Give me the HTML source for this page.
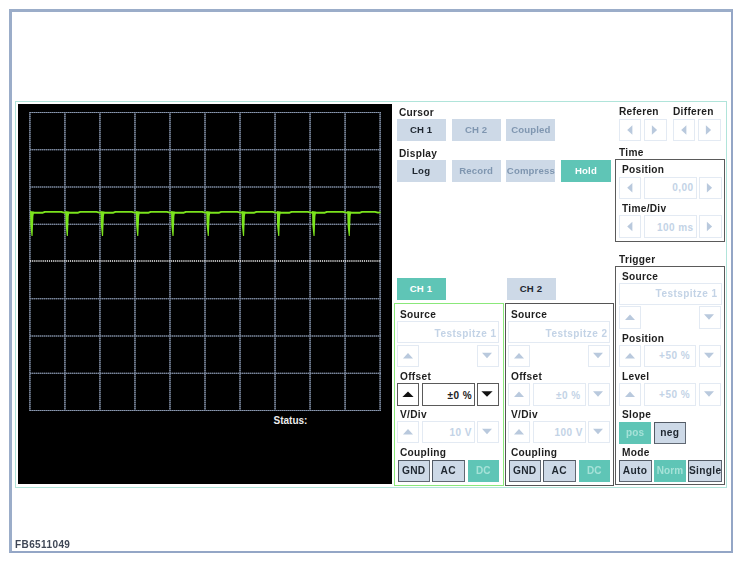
<!DOCTYPE html><html><head><meta charset="utf-8"><title>Scope</title><style>
*{box-sizing:border-box;margin:0;padding:0}
html,body{width:742px;height:562px;background:#fff;overflow:hidden}
body{position:relative;font-family:"Liberation Sans",sans-serif;font-weight:bold;font-size:10px;color:#222}
.a{position:absolute}
.frame{left:9px;top:9px;width:724px;height:544px;border:solid #94a6c6;border-width:3px 2px 2px 3px;border-top-color:#9badc9;border-left-color:#9badc9}
.inner{left:15px;top:101px;width:712px;height:387px;border:1px solid #b0e4da}
.scope{left:18px;top:104px;width:374px;height:380px;background:#000}
.lbl{position:absolute;font-size:10.15px;line-height:12px;color:#1e1e1e;white-space:nowrap;letter-spacing:0.3px}
.btn{position:absolute;height:22px;line-height:22px;text-align:center;font-size:9.6px;background:#cdd9e7;color:#1f2730;white-space:nowrap;letter-spacing:0.15px}
.btn.dis{color:#7f96b0}
.btn.on{background:#5fc5b6;color:#fff}
.btn.on.dim{color:#a6e2d8;font-size:10px}
.btn.bd{border:1px solid #606873;border-top-color:#525a65;border-left-color:#525a65;font-size:10.2px;letter-spacing:0.3px}
.box{position:absolute;height:22px;border:1px solid #e3eaf3;background:#fff;line-height:20px;font-size:10px;color:#c3d3e6;text-align:right;padding-right:5px;white-space:nowrap;letter-spacing:0.45px}
.box.act{border:1px solid #5a5a5a;color:#222}
.panel{position:absolute;border:1px solid #5a5a5a;background:transparent}
.tri{position:absolute;width:0;height:0}
</style></head><body><div id="root" style="position:absolute;left:0;top:0;width:742px;height:562px;filter:blur(0.3px)"><div class="a frame"></div>
<div class="a inner"></div>
<div class="a scope"></div>
<svg class="a" style="left:0;top:0" width="742" height="562"><g style="filter:blur(0.35px)"><line x1="29.90" y1="112" x2="29.90" y2="411" stroke="#5e6a7e" stroke-width="1.2"/><line x1="29.90" y1="112" x2="29.90" y2="411" stroke="#8c99ae" stroke-width="1.2" stroke-dasharray="1 1"/><line x1="64.92" y1="112" x2="64.92" y2="411" stroke="#5e6a7e" stroke-width="1.2"/><line x1="64.92" y1="112" x2="64.92" y2="411" stroke="#8c99ae" stroke-width="1.2" stroke-dasharray="1 1"/><line x1="99.94" y1="112" x2="99.94" y2="411" stroke="#5e6a7e" stroke-width="1.2"/><line x1="99.94" y1="112" x2="99.94" y2="411" stroke="#8c99ae" stroke-width="1.2" stroke-dasharray="1 1"/><line x1="134.96" y1="112" x2="134.96" y2="411" stroke="#5e6a7e" stroke-width="1.2"/><line x1="134.96" y1="112" x2="134.96" y2="411" stroke="#8c99ae" stroke-width="1.2" stroke-dasharray="1 1"/><line x1="169.98" y1="112" x2="169.98" y2="411" stroke="#5e6a7e" stroke-width="1.2"/><line x1="169.98" y1="112" x2="169.98" y2="411" stroke="#8c99ae" stroke-width="1.2" stroke-dasharray="1 1"/><line x1="205.00" y1="112" x2="205.00" y2="411" stroke="#5e6a7e" stroke-width="1.2"/><line x1="205.00" y1="112" x2="205.00" y2="411" stroke="#8c99ae" stroke-width="1.2" stroke-dasharray="1 1"/><line x1="240.02" y1="112" x2="240.02" y2="411" stroke="#5e6a7e" stroke-width="1.2"/><line x1="240.02" y1="112" x2="240.02" y2="411" stroke="#8c99ae" stroke-width="1.2" stroke-dasharray="1 1"/><line x1="275.04" y1="112" x2="275.04" y2="411" stroke="#5e6a7e" stroke-width="1.2"/><line x1="275.04" y1="112" x2="275.04" y2="411" stroke="#8c99ae" stroke-width="1.2" stroke-dasharray="1 1"/><line x1="310.06" y1="112" x2="310.06" y2="411" stroke="#5e6a7e" stroke-width="1.2"/><line x1="310.06" y1="112" x2="310.06" y2="411" stroke="#8c99ae" stroke-width="1.2" stroke-dasharray="1 1"/><line x1="345.08" y1="112" x2="345.08" y2="411" stroke="#5e6a7e" stroke-width="1.2"/><line x1="345.08" y1="112" x2="345.08" y2="411" stroke="#8c99ae" stroke-width="1.2" stroke-dasharray="1 1"/><line x1="380.10" y1="112" x2="380.10" y2="411" stroke="#5e6a7e" stroke-width="1.2"/><line x1="380.10" y1="112" x2="380.10" y2="411" stroke="#8c99ae" stroke-width="1.2" stroke-dasharray="1 1"/><line x1="30" y1="112.50" x2="381" y2="112.50" stroke="#5e6a7e" stroke-width="1.2"/><line x1="30" y1="112.50" x2="381" y2="112.50" stroke="#8c99ae" stroke-width="1.2" stroke-dasharray="1 1"/><line x1="30" y1="149.75" x2="381" y2="149.75" stroke="#5e6a7e" stroke-width="1.2"/><line x1="30" y1="149.75" x2="381" y2="149.75" stroke="#8c99ae" stroke-width="1.2" stroke-dasharray="1 1"/><line x1="30" y1="187.00" x2="381" y2="187.00" stroke="#5e6a7e" stroke-width="1.2"/><line x1="30" y1="187.00" x2="381" y2="187.00" stroke="#8c99ae" stroke-width="1.2" stroke-dasharray="1 1"/><line x1="30" y1="224.25" x2="381" y2="224.25" stroke="#5e6a7e" stroke-width="1.2"/><line x1="30" y1="224.25" x2="381" y2="224.25" stroke="#8c99ae" stroke-width="1.2" stroke-dasharray="1 1"/><line x1="30" y1="261.00" x2="381" y2="261.00" stroke="#f2f2f2" stroke-width="1.7" stroke-dasharray="1.2 0.9"/><line x1="30" y1="298.75" x2="381" y2="298.75" stroke="#5e6a7e" stroke-width="1.2"/><line x1="30" y1="298.75" x2="381" y2="298.75" stroke="#8c99ae" stroke-width="1.2" stroke-dasharray="1 1"/><line x1="30" y1="336.00" x2="381" y2="336.00" stroke="#5e6a7e" stroke-width="1.2"/><line x1="30" y1="336.00" x2="381" y2="336.00" stroke="#8c99ae" stroke-width="1.2" stroke-dasharray="1 1"/><line x1="30" y1="373.25" x2="381" y2="373.25" stroke="#5e6a7e" stroke-width="1.2"/><line x1="30" y1="373.25" x2="381" y2="373.25" stroke="#8c99ae" stroke-width="1.2" stroke-dasharray="1 1"/><line x1="30" y1="410.50" x2="381" y2="410.50" stroke="#5e6a7e" stroke-width="1.2"/><line x1="30" y1="410.50" x2="381" y2="410.50" stroke="#8c99ae" stroke-width="1.2" stroke-dasharray="1 1"/></g><path d="M30.9,212.79999999999998 L34.9,212.79999999999998 L42.9,212.7 L44.9,211.89999999999998 L61.2,211.89999999999998 L64.2,212.6 L70.2,212.79999999999998 L78.2,212.7 L80.2,211.89999999999998 L96.4,211.89999999999998 L99.4,212.6 L105.4,212.79999999999998 L113.4,212.7 L115.4,211.89999999999998 L131.7,211.89999999999998 L134.7,212.6 L140.7,212.79999999999998 L148.7,212.7 L150.7,211.89999999999998 L166.9,211.89999999999998 L169.9,212.6 L175.9,212.79999999999998 L183.9,212.7 L185.9,211.89999999999998 L202.2,211.89999999999998 L205.2,212.6 L211.2,212.79999999999998 L219.2,212.7 L221.2,211.89999999999998 L237.4,211.89999999999998 L240.4,212.6 L246.4,212.79999999999998 L254.4,212.7 L256.4,211.89999999999998 L272.6,211.89999999999998 L275.6,212.6 L281.6,212.79999999999998 L289.6,212.7 L291.6,211.89999999999998 L307.9,211.89999999999998 L310.9,212.6 L316.9,212.79999999999998 L324.9,212.7 L326.9,211.89999999999998 L343.1,211.89999999999998 L346.1,212.6 L352.1,212.79999999999998 L360.1,212.7 L362.1,211.89999999999998 L375.0,211.89999999999998 L378.0,212.6 L380.5,212.39999999999998" fill="none" stroke="#7be41d" stroke-width="1.9" stroke-linejoin="round"/><polygon points="30.0,211.0 34.2,211.79999999999998 33.4,216.2 32.6,236 31.5,236 30.4,226" fill="#7be41d"/><polygon points="65.2,211.0 69.5,211.79999999999998 68.7,216.2 67.9,236 66.8,236 65.7,226" fill="#7be41d"/><polygon points="100.5,211.0 104.7,211.79999999999998 103.9,216.2 103.1,236 102.0,236 100.9,226" fill="#7be41d"/><polygon points="135.8,211.0 140.0,211.79999999999998 139.2,216.2 138.3,236 137.2,236 136.2,226" fill="#7be41d"/><polygon points="171.0,211.0 175.2,211.79999999999998 174.4,216.2 173.6,236 172.5,236 171.4,226" fill="#7be41d"/><polygon points="206.2,211.0 210.5,211.79999999999998 209.7,216.2 208.8,236 207.8,236 206.7,226" fill="#7be41d"/><polygon points="241.5,211.0 245.7,211.79999999999998 244.9,216.2 244.1,236 243.0,236 241.9,226" fill="#7be41d"/><polygon points="276.8,211.0 280.9,211.79999999999998 280.1,216.2 279.3,236 278.2,236 277.1,226" fill="#7be41d"/><polygon points="312.0,211.0 316.2,211.79999999999998 315.4,216.2 314.6,236 313.5,236 312.4,226" fill="#7be41d"/><polygon points="347.2,211.0 351.4,211.79999999999998 350.6,216.2 349.8,236 348.8,236 347.6,226" fill="#7be41d"/></svg>
<div class="lbl" style="left:273.5px;top:415px;color:#ececec;font-size:10px;letter-spacing:0">Status:</div>
<div class="lbl" style="left:399px;top:106.9px;">Cursor</div>
<div class="btn " style="left:396.7px;top:119px;width:48.900000000000034px;height:21.599999999999994px;line-height:21.599999999999994px">CH 1</div>
<div class="btn dis" style="left:451.7px;top:119px;width:48.900000000000034px;height:21.599999999999994px;line-height:21.599999999999994px">CH 2</div>
<div class="btn dis" style="left:506.3px;top:119px;width:49.19999999999999px;height:21.599999999999994px;line-height:21.599999999999994px">Coupled</div>
<div class="lbl" style="left:399px;top:147.8px;">Display</div>
<div class="btn " style="left:396.7px;top:160px;width:48.900000000000034px;height:21.5px;line-height:21.5px">Log</div>
<div class="btn dis" style="left:451.7px;top:160px;width:48.900000000000034px;height:21.5px;line-height:21.5px">Record</div>
<div class="btn dis" style="left:506.3px;top:160px;width:49.19999999999999px;height:21.5px;line-height:21.5px">Compress</div>
<div class="btn on" style="left:561.2px;top:160px;width:49.59999999999991px;height:21.5px;line-height:21.5px">Hold</div>
<div class="lbl" style="left:619px;top:106.4px;">Referen</div>
<div class="lbl" style="left:673px;top:106.4px;">Differen</div>
<div class="box " style="left:619px;top:119px;width:22px;height:22px;line-height:20px;padding-top:0px;padding-right:5px"></div>
<svg class="a" style="left:0;top:0" width="742" height="562"><polygon points="632.4,125.2 632.4,134.8 627.2,130.0" fill="#b9c9dd"/></svg>
<div class="box " style="left:644px;top:119px;width:23px;height:22px;line-height:20px;padding-top:0px;padding-right:5px"></div>
<svg class="a" style="left:0;top:0" width="742" height="562"><polygon points="651.9,125.2 651.9,134.8 657.1,130.0" fill="#b9c9dd"/></svg>
<div class="box " style="left:673px;top:119px;width:22px;height:22px;line-height:20px;padding-top:0px;padding-right:5px"></div>
<svg class="a" style="left:0;top:0" width="742" height="562"><polygon points="686.4,125.2 686.4,134.8 681.2,130.0" fill="#b9c9dd"/></svg>
<div class="box " style="left:698px;top:119px;width:23px;height:22px;line-height:20px;padding-top:0px;padding-right:5px"></div>
<svg class="a" style="left:0;top:0" width="742" height="562"><polygon points="705.9,125.2 705.9,134.8 711.1,130.0" fill="#b9c9dd"/></svg>
<div class="lbl" style="left:619px;top:147.4px;">Time</div>
<div class="panel" style="left:615px;top:159px;width:110px;height:82.5px"></div>
<div class="lbl" style="left:622px;top:164.4px;">Position</div>
<div class="box " style="left:619px;top:176.5px;width:22px;height:22.5px;line-height:20.5px;padding-top:0px;padding-right:5px"></div>
<svg class="a" style="left:0;top:0" width="742" height="562"><polygon points="632.4,182.95 632.4,192.55 627.2,187.75" fill="#b9c9dd"/></svg>
<div class="box " style="left:644px;top:176.5px;width:53px;height:22.5px;line-height:20.5px;padding-top:0.5px;padding-right:2.5px">0,00</div>
<div class="box " style="left:699px;top:176.5px;width:23px;height:22.5px;line-height:20.5px;padding-top:0px;padding-right:5px"></div>
<svg class="a" style="left:0;top:0" width="742" height="562"><polygon points="706.9,182.95 706.9,192.55 712.1,187.75" fill="#b9c9dd"/></svg>
<div class="lbl" style="left:622px;top:203.4px;">Time/Div</div>
<div class="box " style="left:619px;top:215px;width:22px;height:23px;line-height:21px;padding-top:0px;padding-right:5px"></div>
<svg class="a" style="left:0;top:0" width="742" height="562"><polygon points="632.4,221.7 632.4,231.3 627.2,226.5" fill="#b9c9dd"/></svg>
<div class="box " style="left:644px;top:215px;width:53px;height:23px;line-height:21px;padding-top:1px;padding-right:2.5px">100 ms</div>
<div class="box " style="left:699px;top:215px;width:23px;height:23px;line-height:21px;padding-top:0px;padding-right:5px"></div>
<svg class="a" style="left:0;top:0" width="742" height="562"><polygon points="706.9,221.7 706.9,231.3 712.1,226.5" fill="#b9c9dd"/></svg>
<div class="lbl" style="left:619px;top:253.5px;">Trigger</div>
<div class="panel" style="left:615px;top:266px;width:110px;height:219px"></div>
<div class="lbl" style="left:622px;top:270.7px;">Source</div>
<div class="box " style="left:619px;top:283px;width:103px;height:22px;line-height:20px;padding-top:0px;padding-right:3.5px">Testspitze 1</div>
<div class="box " style="left:619px;top:306px;width:22px;height:23px;line-height:21px;padding-top:0px;padding-right:5px"></div>
<svg class="a" style="left:0;top:0" width="742" height="562"><polygon points="625.0,320.1 635.0,320.1 630.0,314.5" fill="#b9c9dd"/></svg>
<div class="box " style="left:699px;top:306px;width:22px;height:23px;line-height:21px;padding-top:0px;padding-right:5px"></div>
<svg class="a" style="left:0;top:0" width="742" height="562"><polygon points="704.0,314.3 714.0,314.3 709.0,319.8" fill="#b9c9dd"/></svg>
<div class="lbl" style="left:622px;top:333.0px;">Position</div>
<div class="box " style="left:619px;top:345px;width:22px;height:22px;line-height:20px;padding-top:0px;padding-right:5px"></div>
<svg class="a" style="left:0;top:0" width="742" height="562"><polygon points="625.0,358.6 635.0,358.6 630.0,353.0" fill="#b9c9dd"/></svg>
<div class="box " style="left:644px;top:345px;width:52px;height:22px;line-height:20px;padding-top:0px;padding-right:5px">+50 %</div>
<div class="box " style="left:699px;top:345px;width:22px;height:22px;line-height:20px;padding-top:0px;padding-right:5px"></div>
<svg class="a" style="left:0;top:0" width="742" height="562"><polygon points="704.0,352.8 714.0,352.8 709.0,358.3" fill="#b9c9dd"/></svg>
<div class="lbl" style="left:622px;top:370.8px;">Level</div>
<div class="box " style="left:619px;top:383px;width:22px;height:23px;line-height:21px;padding-top:0px;padding-right:5px"></div>
<svg class="a" style="left:0;top:0" width="742" height="562"><polygon points="625.0,397.1 635.0,397.1 630.0,391.5" fill="#b9c9dd"/></svg>
<div class="box " style="left:644px;top:383px;width:52px;height:23px;line-height:21px;padding-top:0px;padding-right:5px">+50 %</div>
<div class="box " style="left:699px;top:383px;width:22px;height:23px;line-height:21px;padding-top:0px;padding-right:5px"></div>
<svg class="a" style="left:0;top:0" width="742" height="562"><polygon points="704.0,391.3 714.0,391.3 709.0,396.8" fill="#b9c9dd"/></svg>
<div class="lbl" style="left:622px;top:409.2px;">Slope</div>
<div class="btn on dim" style="left:619px;top:421.5px;width:32px;height:22.0px;line-height:22.0px">pos</div>
<div class="btn bd" style="left:653.5px;top:421.5px;width:32.5px;height:22.0px;line-height:20.0px">neg</div>
<div class="lbl" style="left:622px;top:447.2px;">Mode</div>
<div class="btn bd" style="left:618.5px;top:459.5px;width:33.0px;height:22.0px;line-height:20.0px">Auto</div>
<div class="btn on dim" style="left:654px;top:459.5px;width:32px;height:22.0px;line-height:22.0px">Norm</div>
<div class="btn bd" style="left:688px;top:459.5px;width:34px;height:22.0px;line-height:20.0px">Single</div>
<div class="btn on" style="left:396.5px;top:278px;width:49.0px;height:22px;line-height:22px">CH 1</div>
<div class="btn " style="left:506.5px;top:278px;width:49.0px;height:22px;line-height:22px">CH 2</div>
<div class="panel" style="left:394px;top:303px;width:110px;height:182.5px;border-color:#8be87a"></div>
<div class="lbl" style="left:400px;top:309.0px;">Source</div>
<div class="box " style="left:397px;top:321px;width:102px;height:22px;line-height:20px;padding-top:1.5px;padding-right:1.5px">Testspitze 1</div>
<div class="box " style="left:397px;top:345px;width:22px;height:22px;line-height:20px;padding-top:0px;padding-right:5px"></div>
<svg class="a" style="left:0;top:0" width="742" height="562"><polygon points="403.0,358.6 413.0,358.6 408.0,353.0" fill="#b9c9dd"/></svg>
<div class="box " style="left:477px;top:345px;width:22px;height:22px;line-height:20px;padding-top:0px;padding-right:5px"></div>
<svg class="a" style="left:0;top:0" width="742" height="562"><polygon points="482.0,352.8 492.0,352.8 487.0,358.3" fill="#b9c9dd"/></svg>
<div class="lbl" style="left:400px;top:371.1px;">Offset</div>
<div class="box act" style="left:397px;top:383px;width:22px;height:23px;line-height:21px;padding-top:0px;padding-right:5px"></div>
<svg class="a" style="left:0;top:0" width="742" height="562"><polygon points="402.4,397.1 413.6,397.1 408.0,391.5" fill="#111"/></svg>
<div class="box act" style="left:422px;top:383px;width:53px;height:23px;line-height:21px;padding-top:1.3px;padding-right:2px">±0 %</div>
<div class="box act" style="left:477px;top:383px;width:22px;height:23px;line-height:21px;padding-top:0px;padding-right:5px"></div>
<svg class="a" style="left:0;top:0" width="742" height="562"><polygon points="481.4,391.3 492.6,391.3 487.0,396.8" fill="#111"/></svg>
<div class="lbl" style="left:400px;top:409.2px;">V/Div</div>
<div class="box " style="left:397px;top:421px;width:22px;height:22px;line-height:20px;padding-top:0px;padding-right:5px"></div>
<svg class="a" style="left:0;top:0" width="742" height="562"><polygon points="403.0,434.6 413.0,434.6 408.0,429.0" fill="#b9c9dd"/></svg>
<div class="box " style="left:422px;top:421px;width:53px;height:22px;line-height:20px;padding-top:1.2px;padding-right:2.2px">10 V</div>
<div class="box " style="left:477px;top:421px;width:22px;height:22px;line-height:20px;padding-top:0px;padding-right:5px"></div>
<svg class="a" style="left:0;top:0" width="742" height="562"><polygon points="482.0,428.8 492.0,428.8 487.0,434.3" fill="#b9c9dd"/></svg>
<div class="lbl" style="left:400px;top:447.2px;">Coupling</div>
<div class="btn bd" style="left:397.5px;top:459.5px;width:32.5px;height:22.0px;line-height:20.0px">GND</div>
<div class="btn bd" style="left:432px;top:459.5px;width:32.5px;height:22.0px;line-height:20.0px">AC</div>
<div class="btn on dim" style="left:467.5px;top:460px;width:31.5px;height:21.5px;line-height:21.5px">DC</div>
<div class="panel" style="left:505px;top:303px;width:109px;height:182.5px;border-color:#555"></div>
<div class="lbl" style="left:511px;top:309.0px;">Source</div>
<div class="box " style="left:508px;top:321px;width:102px;height:22px;line-height:20px;padding-top:1.5px;padding-right:1.5px">Testspitze 2</div>
<div class="box " style="left:508px;top:345px;width:22px;height:22px;line-height:20px;padding-top:0px;padding-right:5px"></div>
<svg class="a" style="left:0;top:0" width="742" height="562"><polygon points="514.0,358.6 524.0,358.6 519.0,353.0" fill="#b9c9dd"/></svg>
<div class="box " style="left:588px;top:345px;width:22px;height:22px;line-height:20px;padding-top:0px;padding-right:5px"></div>
<svg class="a" style="left:0;top:0" width="742" height="562"><polygon points="593.0,352.8 603.0,352.8 598.0,358.3" fill="#b9c9dd"/></svg>
<div class="lbl" style="left:511px;top:371.1px;">Offset</div>
<div class="box " style="left:508px;top:383px;width:22px;height:23px;line-height:21px;padding-top:0px;padding-right:5px"></div>
<svg class="a" style="left:0;top:0" width="742" height="562"><polygon points="514.0,397.1 524.0,397.1 519.0,391.5" fill="#b9c9dd"/></svg>
<div class="box " style="left:533px;top:383px;width:53px;height:23px;line-height:21px;padding-top:1.3px;padding-right:4.5px">±0 %</div>
<div class="box " style="left:588px;top:383px;width:22px;height:23px;line-height:21px;padding-top:0px;padding-right:5px"></div>
<svg class="a" style="left:0;top:0" width="742" height="562"><polygon points="593.0,391.3 603.0,391.3 598.0,396.8" fill="#b9c9dd"/></svg>
<div class="lbl" style="left:511px;top:409.2px;">V/Div</div>
<div class="box " style="left:508px;top:421px;width:22px;height:22px;line-height:20px;padding-top:0px;padding-right:5px"></div>
<svg class="a" style="left:0;top:0" width="742" height="562"><polygon points="514.0,434.6 524.0,434.6 519.0,429.0" fill="#b9c9dd"/></svg>
<div class="box " style="left:533px;top:421px;width:53px;height:22px;line-height:20px;padding-top:1.2px;padding-right:2.2px">100 V</div>
<div class="box " style="left:588px;top:421px;width:22px;height:22px;line-height:20px;padding-top:0px;padding-right:5px"></div>
<svg class="a" style="left:0;top:0" width="742" height="562"><polygon points="593.0,428.8 603.0,428.8 598.0,434.3" fill="#b9c9dd"/></svg>
<div class="lbl" style="left:511px;top:447.2px;">Coupling</div>
<div class="btn bd" style="left:508.5px;top:459.5px;width:32.5px;height:22.0px;line-height:20.0px">GND</div>
<div class="btn bd" style="left:543px;top:459.5px;width:32.5px;height:22.0px;line-height:20.0px">AC</div>
<div class="btn on dim" style="left:578.5px;top:460px;width:31.5px;height:21.5px;line-height:21.5px">DC</div>
<div class="lbl" style="left:15px;top:538.8px;color:#3f4756;font-size:10px;letter-spacing:0.4px">FB6511049</div></div></body></html>
